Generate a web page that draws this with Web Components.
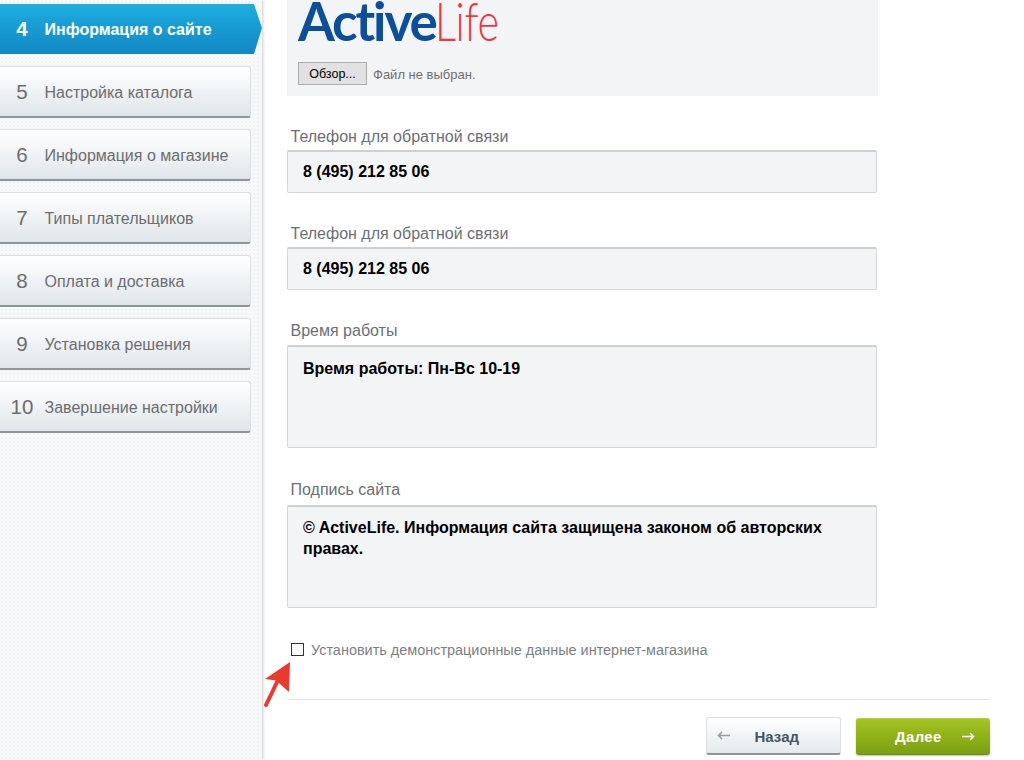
<!DOCTYPE html>
<html lang="ru">
<head>
<meta charset="utf-8">
<title>Мастер настройки</title>
<style>
html,body{margin:0;padding:0;background:#fff;height:760px;overflow:hidden}
body{font-family:"Liberation Sans",Arial,sans-serif}
</style>
</head>
<body>
<wizard-page>
  <step-list slot="side">
    <wizard-step num="4" active>Информация о сайте</wizard-step>
    <wizard-step num="5">Настройка каталога</wizard-step>
    <wizard-step num="6">Информация о магазине</wizard-step>
    <wizard-step num="7">Типы плательщиков</wizard-step>
    <wizard-step num="8">Оплата и доставка</wizard-step>
    <wizard-step num="9">Установка решения</wizard-step>
    <wizard-step num="10">Завершение настройки</wizard-step>
  </step-list>
  <logo-panel></logo-panel>
  <form-field label="Телефон для обратной связи" style="margin-top:31px">8 (495) 212 85 06</form-field>
  <form-field label="Телефон для обратной связи" style="margin-top:31px">8 (495) 212 85 06</form-field>
  <form-field label="Время работы" area style="margin-top:30px;--lh:25px">Время работы: Пн-Вс 10-19</form-field>
  <form-field label="Подпись сайта" area style="margin-top:31px;--lh:26px;--pad:10px">© ActiveLife. Информация сайта защищена законом об авторских правах.</form-field>
  <demo-check></demo-check>
  <wizard-footer></wizard-footer>
</wizard-page>

<script>
class wizardPage extends HTMLElement{
    constructor(){
        super()
        this.attachShadow({mode:"open"})
        this.shadowRoot.innerHTML = `
        <style>
        :host{display:flex;width:1024px;height:760px;overflow:hidden;position:relative}
        aside{
            flex:0 0 262px;
            height:760px;
            background-color:#f7f8f9;
            background-image:radial-gradient(#f0f2f3 1px,transparent 1px);
            background-size:4px 4px;
            box-shadow:1px 0 3px rgba(0,0,0,.2);
        }
        main{flex:0 0 702px;margin-left:25px}
        </style>
        <aside><slot name="side"></slot></aside>
        <main><slot></slot></main>
        `
    }
}
customElements.define("wizard-page",wizardPage)

class stepList extends HTMLElement{
    constructor(){
        super()
        this.attachShadow({mode:"open"})
        this.shadowRoot.innerHTML = `
        <style>
        :host{display:flex;flex-direction:column;gap:11px;padding-top:4px}
        </style>
        <slot></slot>
        `
    }
}
customElements.define("step-list",stepList)

class wizardStep extends HTMLElement{
    constructor(){
        super()
        this.attachShadow({mode:"open"})
    }
    connectedCallback(){
        this.shadowRoot.innerHTML = `
        <style>
        :host{
            display:flex;align-items:center;box-sizing:border-box;
            width:251px;height:52px;
            background:linear-gradient(#fff 0%,#f4f6f8 35%,#dfe6e9 100%);
            border:1px solid #dcdfe0;border-left:0;
            border-bottom:2px solid #8f9496;
            border-radius:0 3px 3px 0;
            color:#6d6d6d;font-size:16px;
        }
        :host([active]){
            width:262px;height:50px;margin-bottom:1px;
            border:0;border-radius:0;
            background:linear-gradient(#1eaede 0%,#1187c5 100%);
            clip-path:polygon(0 0,254px 0,262px 24px,254px 50px,0 50px);
            color:#fff;font-weight:bold;
        }
        b{flex:0 0 44px;text-align:center;font-weight:normal;font-size:20.5px}
        span{padding:3px 0 0 .5px}
        :host([active]) b{font-weight:bold}
        :host([active]) span{padding-top:2px}
        </style>
        <b>${this.getAttribute("num")}</b><span><slot></slot></span>
        `
    }
}
customElements.define("wizard-step",wizardStep)

class logoPanel extends HTMLElement{
    constructor(){
        super()
        this.attachShadow({mode:"open"})
        this.shadowRoot.innerHTML = `
        <style>
        :host{display:block;box-sizing:border-box;width:591px;height:96px;background:#f3f4f6;padding-left:11px}
        .logo{display:flex;height:62px;line-height:42px;font-size:53px;font-family:"Lato","Liberation Sans",sans-serif;letter-spacing:-2.1px}
        .active{color:#0b4f9c;font-weight:bold}
        .life{color:#f4333f;font-weight:300;letter-spacing:-.4px;transform:scaleX(.78);transform-origin:left center;margin-left:-1px}
        .file{display:flex;align-items:center;gap:6px;font-size:13px;color:#6f6f6f}
        .btn{
            box-sizing:border-box;width:69px;height:23px;padding-top:1px;font-size:12.5px;
            background:#e1e1e1;border:1px solid #adadad;color:#000;
            display:flex;align-items:center;justify-content:center;
        }
        .file span:last-child{padding-top:1px}
        </style>
        <div class="logo"><span class="active">Active</span><span class="life">Life</span></div>
        <div class="file"><span class="btn">Обзор...</span><span>Файл не выбран.</span></div>
        `
    }
}
customElements.define("logo-panel",logoPanel)

class formField extends HTMLElement{
    constructor(){
        super()
        this.attachShadow({mode:"open"})
    }
    connectedCallback(){
        this.shadowRoot.innerHTML = `
        <style>
        :host{display:block;width:590px}
        label{display:block;padding-left:3.5px;height:var(--lh,23px);line-height:19px;font-size:16px;color:#6b6f75}
        :host([area]) label{line-height:21px}
        .box{
            box-sizing:border-box;height:43px;padding:var(--pad,9px) 15px 0;
            background:#f3f4f6;border:1px solid #d3d5d8;border-top:2px solid #cdcfd2;border-radius:2px;
            color:#000;font-size:16px;font-weight:bold;line-height:21px;
        }
        :host([area]) .box{height:103px;padding-top:var(--pad,11px)}
        </style>
        <label>${this.getAttribute("label")}</label>
        <div class="box"><slot></slot></div>
        `
    }
}
customElements.define("form-field",formField)

class demoCheck extends HTMLElement{
    constructor(){
        super()
        this.attachShadow({mode:"open"})
        this.shadowRoot.innerHTML = `
        <style>
        :host{display:flex;align-items:center;gap:7px;margin-top:34px;padding-left:4px;height:14px;font-size:14.45px;color:#7b7f85;position:relative}
        i{box-sizing:border-box;width:13px;height:13px;border:1px solid #333;background:#fff;display:block}
        span{padding-top:2px}
        svg{position:absolute;left:-25px;top:19px}
        </style>
        <i></i><span>Установить демонстрационные данные интернет-магазина</span>
        <svg width="32" height="52" viewBox="0 0 32 52">
          <path d="M28 1 L3 18 L14 19.5 L27 31 Z" fill="#ea3a30"/>
          <path d="M16 19 L4 44" fill="none" stroke="#ea3a30" stroke-width="4" stroke-linecap="round"/>
        </svg>
        `
    }
}
customElements.define("demo-check",demoCheck)

class wizardFooter extends HTMLElement{
    constructor(){
        super()
        this.attachShadow({mode:"open"})
        this.shadowRoot.innerHTML = `
        <style>
        :host{display:flex;justify-content:flex-end;gap:15px;margin-top:43px;padding-top:17px;width:702px;border-top:1px solid #e3e3e3;font-size:15px;font-weight:bold}
        .btn{box-sizing:border-box;height:38px;border-radius:3px;display:flex;align-items:center;justify-content:space-between}
        .back{
            width:135px;padding:0 41px 0 10px;color:#47556b;
            background:linear-gradient(#fff,#e3e9ec);
            border:1px solid #dcdfe1;border-bottom:2px solid #8e9395;
        }
        .back span{padding-top:2px}
        .next{
            width:134px;height:37px;margin:1px -1px 0 0;padding:0 15px 0 39px;color:#fff;letter-spacing:.3px;
            background:linear-gradient(#a3c423,#7b9f10);
            border-top:1px solid #b7d23a;border-bottom:1px solid #6d8d10;
            box-shadow:0 1px 2px rgba(0,0,0,.25);
        }
        svg{display:block}
        </style>
        <div class="btn back">
          <svg width="13" height="9" viewBox="0 0 13 9"><path d="M13 4.5H2M5 1 1.5 4.5 5 8" fill="none" stroke="#9a9d9f" stroke-width="1.6"/></svg>
          <span>Назад</span>
        </div>
        <div class="btn next">
          <span>Далее</span>
          <svg width="13" height="9" viewBox="0 0 13 9"><path d="M0 4.5H11M8 1 11.5 4.5 8 8" fill="none" stroke="#fff" stroke-width="1.6"/></svg>
        </div>
        `
    }
}
customElements.define("wizard-footer",wizardFooter)
</script>
</body>
</html>
